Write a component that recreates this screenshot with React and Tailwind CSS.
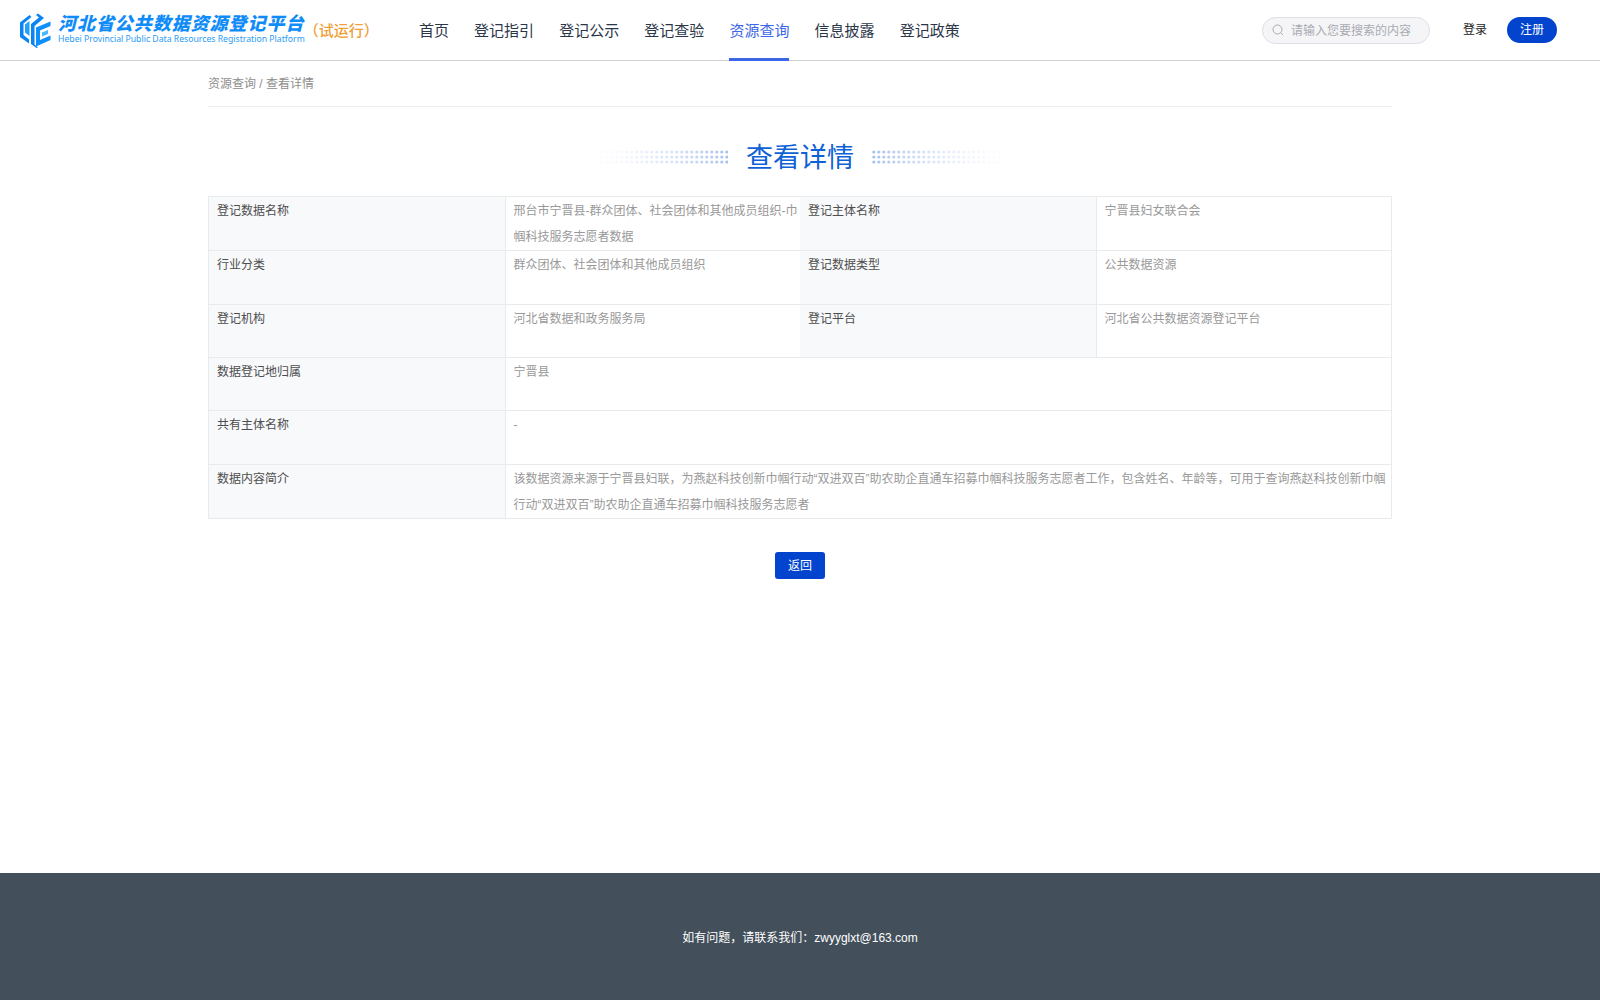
import React from "react";

const NAV = ["首页", "登记指引", "登记公示", "登记查验", "资源查询", "信息披露", "登记政策"];

const FONT = "font-['Liberation_Sans','Noto_Sans_CJK_SC',sans-serif]";

function Logo() {
  return (
    <svg width="31" height="35" viewBox="0 0 31 35" fill="none" className="shrink-0">
      <path d="M0 9.5 9.5 2 11.5 4 3.5 10.5V22L9 26.5V30.5L0 24Z" fill="#0a84f5" />
      <path d="M5 11.5 9.5 8V23L5 19.5Z" fill="#22a0fb" />
      <path d="M11 11 19 4.5 16 2 18 .5 24 5 14.5 13V31.5L18 34.5 16.5 35 11 31Z" fill="#0a84f5" />
      <path d="M16 14.5 30.5 8.5V13L20 17.5V27L30.5 22.5V27L16 33.5Z" fill="#0f8ff7" />
      <path d="M22 19.5 28 17V21L22 23.5Z" fill="#4ab8ff" />
    </svg>
  );
}

function Dots({ reverse }) {
  const cols = 26;
  const dots = [];
  for (let r = 0; r < 3; r++) {
    for (let c = 0; c < cols; c++) {
      const t = reverse ? 1 - c / (cols - 1) : c / (cols - 1);
      dots.push(<circle key={r + "-" + c} cx={1.8 + c * 5} cy={2 + r * 5} r="1.6" fill="#1d5fd0" opacity={Math.pow(t, 1.5) * 0.36 + 0.02} />);
    }
  }
  return (
    <svg width="128" height="14" viewBox="0 0 128 14" className="shrink-0">
      {dots}
    </svg>
  );
}

function Label({ children }) {
  return <div className="bg-[#f8f9fb] px-2 pt-px text-[12px] leading-[26px] text-[#4d4d4d]">{children}</div>;
}

function Value({ children, className = "" }) {
  return <div className={"px-2 pt-px text-[12px] leading-[26px] text-[#999] " + className}>{children}</div>;
}

export default function App() {
  return (
    <div className={"min-h-[1000px] flex flex-col bg-white " + FONT}>
      <header className="h-[61px] shrink-0 flex items-center border-b border-[#cfd1d4] pl-5 pr-[43px]">
        <div className="w-[399px] flex items-center">
          <Logo />
          <div className="ml-[7px] -mt-[2px]">
            <div className="text-[18px] leading-[20px] font-black italic tracking-[0.95px] text-[#0f8cf7] whitespace-nowrap">河北省公共数据资源登记平台</div>
            <div className="text-[8.68px] leading-[10px] text-[#2a9bf5] whitespace-nowrap font-['Noto_Sans',sans-serif]">Hebei Provincial Public Data Resources Registration Platform</div>
          </div>
          <div className="text-[15px] font-medium text-[#f0a038] whitespace-nowrap -ml-px pt-[2px]">（试运行）</div>
        </div>
        <nav className="flex gap-[25.1px] h-full self-stretch">
          {NAV.map((item) =>
            item === "资源查询" ? (
              <a key={item} className="flex items-center text-[15px] text-[#3b66e6] border-b-[3px] border-[#3b66e6] pt-[5px] -mb-px">{item}</a>
            ) : (
              <a key={item} className="flex items-center text-[15px] text-[#2b3648] pt-[3px]">{item}</a>
            )
          )}
        </nav>
        <div className="ml-auto flex items-center">
          <div className="w-[168px] h-[27px] rounded-full bg-[#f5f5f7] border border-[#dcdfe6] flex items-center pl-[9px]">
            <svg width="12" height="12" viewBox="0 0 12 12" fill="none" stroke="#a8abb2" strokeWidth="1">
              <circle cx="5.5" cy="5.5" r="4.5" />
              <path d="m9 9 2 2" />
            </svg>
            <span className="ml-[7px] pt-[2px] text-[12px] text-[#a8abb2]">请输入您要搜索的内容</span>
          </div>
          <span className="ml-[33px] text-[12px] text-[#222]">登录</span>
          <span className="ml-[20px] w-[50px] h-[26px] rounded-full bg-[#0344cf] text-white text-[12px] flex items-center justify-center">注册</span>
        </div>
      </header>

      <main className="flex-1 w-[1184px] mx-auto">
        <div className="h-[46px] flex items-center border-b border-[#eceef0] text-[12px] text-[#8e8e8e]">资源查询 / 查看详情</div>
        <div className="h-[89px] pt-[11px] flex items-center justify-center">
          <Dots />
          <h1 className="mx-[18px] pt-[2px] text-[27px] font-normal text-[#0f62d6]">查看详情</h1>
          <Dots reverse />
        </div>

        <div className="border border-[#e8ebee] border-b-0">
          <div className="grid grid-cols-4 h-[54px] border-b border-[#e8ebee]">
            <Label>登记数据名称</Label>
            <Value className="border-l border-[#e8ebee] pr-0">邢台市宁晋县-群众团体、社会团体和其他成员组织-巾帼科技服务志愿者数据</Value>
            <Label>登记主体名称</Label>
            <Value className="border-l border-[#e8ebee]">宁晋县妇女联合会</Value>
          </div>
          <div className="grid grid-cols-4 h-[54px] border-b border-[#e8ebee]">
            <Label>行业分类</Label>
            <Value className="border-l border-[#e8ebee]">群众团体、社会团体和其他成员组织</Value>
            <Label>登记数据类型</Label>
            <Value className="border-l border-[#e8ebee]">公共数据资源</Value>
          </div>
          <div className="grid grid-cols-4 h-[53px] border-b border-[#e8ebee]">
            <Label>登记机构</Label>
            <Value className="border-l border-[#e8ebee]">河北省数据和政务服务局</Value>
            <Label>登记平台</Label>
            <Value className="border-l border-[#e8ebee]">河北省公共数据资源登记平台</Value>
          </div>
          <div className="grid grid-cols-4 h-[53px] border-b border-[#e8ebee]">
            <Label>数据登记地归属</Label>
            <Value className="col-span-3 border-l border-[#e8ebee]">宁晋县</Value>
          </div>
          <div className="grid grid-cols-4 h-[54px] border-b border-[#e8ebee]">
            <Label>共有主体名称</Label>
            <Value className="col-span-3 border-l border-[#e8ebee]">-</Value>
          </div>
          <div className="grid grid-cols-4 h-[54px] border-b border-[#e8ebee]">
            <Label>数据内容简介</Label>
            <Value className="col-span-3 border-l border-[#e8ebee] pr-1">该数据资源来源于宁晋县妇联，为燕赵科技创新巾帼行动“双进双百”助农助企直通车招募巾帼科技服务志愿者工作，包含姓名、年龄等，可用于查询燕赵科技创新巾帼行动“双进双百”助农助企直通车招募巾帼科技服务志愿者</Value>
          </div>
        </div>

        <div className="flex justify-center mt-[33px]">
          <button className="w-[50px] h-[27px] rounded-[3px] bg-[#0344cf] text-white text-[12px]">返回</button>
        </div>
      </main>

      <footer className="h-[127px] shrink-0 bg-[#434f5b] flex items-center justify-center pt-[2px] text-[12px] text-white">
        如有问题，请联系我们：zwyyglxt@163.com
      </footer>
    </div>
  );
}
